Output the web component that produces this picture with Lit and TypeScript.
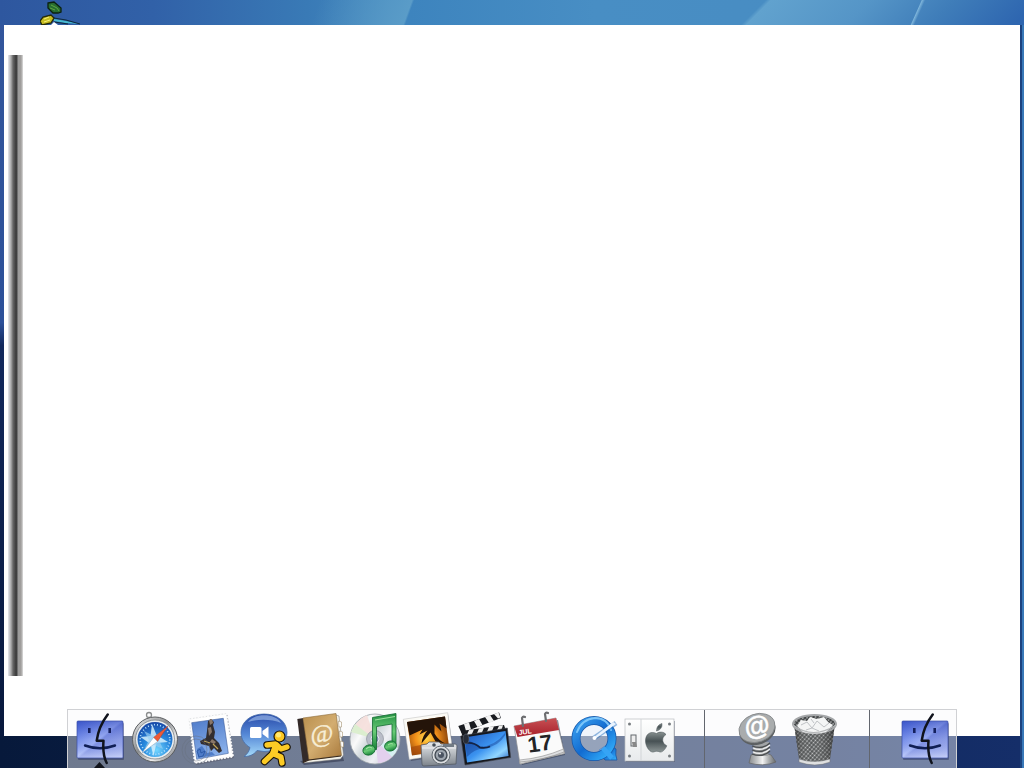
import { LitElement, html, svg, css } from "lit";
import { customElement, property } from "lit/decorators.js";

const finder = svg`
  <defs>
    <linearGradient id="face" x1="0" y1="0" x2="1" y2="1"><stop offset="0" stop-color="#4d6ce0"/><stop offset=".48" stop-color="#a9bbfa"/><stop offset=".52" stop-color="#8496e4"/><stop offset="1" stop-color="#b4bff2"/></linearGradient>
    <linearGradient id="shade" x1="0" y1="0" x2="0" y2="1"><stop offset="0" stop-color="#2a41b6" stop-opacity=".55"/><stop offset=".5" stop-color="#4a62d0" stop-opacity=".15"/><stop offset="1" stop-color="#dfe6ff" stop-opacity=".5"/></linearGradient>
  </defs>
  <rect x="6" y="14" width="46" height="37" rx="1" fill="#1a2450" opacity=".4"/>
  <rect x="5" y="12" width="46" height="37" rx="1" fill="url(#face)"/>
  <rect x="5" y="12" width="46" height="37" rx="1" fill="url(#shade)" stroke="#3a4fa8" stroke-width=".7"/>
  <path d="M17.300 19v5M37.700 19v5" stroke="#14205e" stroke-width="2.600"/>
  <path d="M13 36.500Q28 42 43 36.500" fill="none" stroke="#101f55" stroke-width="2.400" stroke-linecap="round"/>
  <path d="M35.700 5.500C30 13 26 22 24.700 31.700H31.500C30.800 41 32 49 34.700 54" fill="none" stroke="#10131c" stroke-width="2.500" stroke-linecap="round" stroke-linejoin="round"/>`;

const running = svg`${finder}<path d="M22 59l5.500-6 5.500 6z" fill="#12151c"/>`;

const safari = svg`
  <defs>
    <linearGradient id="steel" x1="0" y1="0" x2="1" y2="1"><stop offset="0" stop-color="#f4f4f4"/><stop offset=".45" stop-color="#8b8d90"/><stop offset=".7" stop-color="#eee"/><stop offset="1" stop-color="#55585c"/></linearGradient>
    <radialGradient id="dial" cx=".55" cy=".8" r=".8"><stop offset="0" stop-color="#72d6ff"/><stop offset=".5" stop-color="#2787dc"/><stop offset="1" stop-color="#1747a6"/></radialGradient>
  </defs>
  <circle cx="22" cy="6" r="2.500" fill="none" stroke="#8a8c8d" stroke-width="1.300"/><path d="M19.500 8.500h5l1 3h-6z" fill="#a3a5a6"/>
  <circle cx="28" cy="30.500" r="22.500" fill="url(#steel)" stroke="#5b5e61" stroke-width="1"/>
  <circle cx="28" cy="30.500" r="19.500" fill="#eceff1" stroke="#7c8388" stroke-width=".8"/>
  <circle cx="28" cy="30.500" r="17.500" fill="url(#dial)"/>
  <circle cx="28" cy="30.500" r="14.800" fill="none" stroke="#b6e2ff" stroke-width="1.700" stroke-dasharray="1 2.100"/>
  <path d="M25 15l4.500 11 11.500 7-11.500 1-3 13-3-12-10-7 10-1z" fill="#d5eefb" opacity=".85"/>
  <path d="M17 22l10 5 9-5-4 9 4 9-9-4-9 3 4-8z" fill="#9bd0f2" opacity=".65"/>
  <path d="M41 17L30.500 32.500l-4-4z" fill="#ed5a36" stroke="#a73522" stroke-width=".4"/>
  <path d="M15 44l11.500-15.500 4 4z" fill="#fff" stroke="#7894ad" stroke-width=".4"/>`;

const mail = svg`
  <defs><linearGradient id="sky" x1="0" y1="0" x2=".3" y2="1"><stop offset="0" stop-color="#4e7ac9"/><stop offset="1" stop-color="#89b0ea"/></linearGradient></defs>
  <path d="M7 10.500L44.500 5l6.500 43-38 7z" fill="#556" opacity=".5" transform="translate(1 1)"/>
  <path d="M7 10L44.500 4.500l6.500 43-38 6.500z" fill="#fff" stroke="#b9bdc2" stroke-width=".5"/>
  <path d="M7 10L44.500 4.500l6.500 43-38 6.500z" fill="none" stroke="#fbfbfb" stroke-width="2.200" stroke-linecap="round" stroke-dasharray="0 3.200"/>
  <path d="M9.700 13.700l31.600-4.400 5 35-31.600 6z" fill="url(#sky)" stroke="#3d5d9c" stroke-width=".6"/>
  <path d="M15 40l5-3 5 7 5-1 3 3-17 3z" fill="#3768ba" opacity=".7"/>
  <path d="M26 12l3-2 3 3-1 3 2 7-1 6 5 5 3 8-3 2-5-5-3 3-2-5-8-2-1-3 6-3 1-7z" fill="#332e30"/>
  <path d="M27 11l3-1 1 4-3 2zM26 19l3-1 1 5-3 4zM30 30l4 3-2 2-4-2z" fill="#8a7769"/>
  <path d="M22 32l6 2M31 35l5 5" stroke="#c2a557" stroke-width="1.200"/>
  <path d="M15 42l3-2 1 4 4-2-2 5-4 1z" fill="none" stroke="#24529f" stroke-width=".8"/>
  <g fill="none" stroke="#6a7280" stroke-width=".8" opacity=".6"><circle cx="14" cy="41" r="14"/><circle cx="14" cy="41" r="11"/></g>`;

const chat = svg`
  <defs>
    <linearGradient id="bubble" x1="0" y1="0" x2="0" y2="1"><stop offset="0" stop-color="#2749a8"/><stop offset=".48" stop-color="#5588d6"/><stop offset="1" stop-color="#a5dafa"/></linearGradient>
  </defs>
  <path d="M27 5C13.500 5 4 13 4 23.500c0 7 4 12 9 15-1 4-3 7-6 9 6 0 10-2 13-6l7 1c13.500 0 23-8.500 23-19S40.500 5 27 5z" fill="url(#bubble)" stroke="#486da8" stroke-width=".8"/>
  <path d="M11 13C17 4 39 4 44 14c-9-4-24-4-33-1z" fill="#a8c4ef" opacity=".6"/>
  <rect x="13" y="18" width="11.500" height="11" rx="1.500" fill="#fff"/><path d="M25.500 22l6-4.500v12l-6-4.500z" fill="#fff"/>
  <g stroke-linecap="round" stroke-linejoin="round" fill="none">
    <path d="M30 36l9-1 5 5 6-2M38.500 37l-3 8-8 7.500M37 45l7 3 1 6" stroke="#191307" stroke-width="7.500"/>
    <path d="M30 36l9-1 5 5 6-2M38.500 37l-3 8-8 7.500M37 45l7 3 1 6" stroke="#fccb25" stroke-width="5.300"/>
    <path d="M39 38l-2 6" stroke="#fccb25" stroke-width="7"/>
  </g>
  <circle cx="42.500" cy="27.500" r="5.500" fill="#fbc723" stroke="#191307" stroke-width="1.200"/><circle cx="41.500" cy="26" r="2.500" fill="#ffe873"/>`;

const book = svg`
  <defs><linearGradient id="tan" x1="0" y1="0" x2="1" y2="1"><stop offset="0" stop-color="#b98f4e"/><stop offset=".5" stop-color="#d3ad70"/><stop offset="1" stop-color="#a7783b"/></linearGradient></defs>
  <path d="M8 52l43-4 1 4-40 4z" fill="#293046" opacity=".55"/>
  <path d="M44 6l3 1 4.500 39-3 4-37 4z" fill="#f3f2ea" stroke="#777" stroke-width=".5"/>
  <path d="M46.500 12l3 1v5h-2.500zM47.500 22l3 1v5h-2.500zM48.500 32l3 1v5h-2.500z" fill="#fff" stroke="#96805b" stroke-width=".5"/>
  <path d="M5.300 10l6-1 6.500 41.500-7 3z" fill="#332a28"/>
  <path d="M11 9L44 4.500l5.500 42L17 51z" fill="url(#tan)" stroke="#8b6939" stroke-width=".6"/>
  <path d="M11 53.500l6-2.500 32-4" fill="none" stroke="#35271b" stroke-width="1.200"/>
  <text x="30" y="33" text-anchor="middle" font-family="Liberation Serif, serif" font-size="25" fill="#f7eed6" stroke="#f7eed6" stroke-width=".4" transform="rotate(-6 30 26)">@</text>`;

const music = svg`
  <defs>
    <linearGradient id="disc" x1="0" y1=".2" x2="1" y2=".8"><stop offset="0" stop-color="#d0d4d8"/><stop offset=".25" stop-color="#fafafa"/><stop offset=".45" stop-color="#cbd4d8"/><stop offset=".65" stop-color="#eff0f5"/><stop offset="1" stop-color="#b9c0c8"/></linearGradient>
    <linearGradient id="green" x1="0" y1="0" x2="0" y2="1"><stop offset="0" stop-color="#259144"/><stop offset=".5" stop-color="#69cb76"/><stop offset="1" stop-color="#178238"/></linearGradient>
  </defs>
  <circle cx="28" cy="30" r="25" fill="url(#disc)" stroke="#9da4aa" stroke-width=".8"/>
  <path d="M28 30L8 16q5-7 12-10z" fill="#f6dfdc" opacity=".9"/><path d="M28 30L4 23l4-8z" fill="#dceecf"/>
  <path d="M28 30l17 18q-7 6-14 6z" fill="#e3d0ee"/><path d="M28 30l23 9q-2 5-6 9z" fill="#d6eff2"/>
  <circle cx="28" cy="30" r="8.500" fill="#b9bdc8" stroke="#9297a0" stroke-width=".7"/><circle cx="28" cy="30" r="4" fill="#7f8baa" stroke="#e7e8ee"/>
  <g fill="url(#green)" stroke="#126a30" stroke-width=".8"><path d="M25.500 8.500L49 4.500v33h-4V15L29.500 17.500v23h-4z"/><ellipse cx="22" cy="41" rx="6.200" ry="5" transform="rotate(-18 22 41)"/><ellipse cx="43.500" cy="37" rx="6" ry="5" transform="rotate(-18 43.500 37)"/></g>
  <path d="M28 11l20-3.500M19 40q3-3 6-1M41 36q2-2 5-1" stroke="#9ce09d" fill="none" stroke-width="1.200"/>`;

const photo = svg`
  <defs>
    <radialGradient id="sunset" cx=".45" cy=".55" r=".65"><stop offset="0" stop-color="#ffd84a"/><stop offset=".4" stop-color="#f18f19"/><stop offset="1" stop-color="#602606"/></radialGradient>
    <linearGradient id="body" x1="0" y1="0" x2="0" y2="1"><stop offset="0" stop-color="#e9ebed"/><stop offset=".5" stop-color="#b3b8bd"/><stop offset="1" stop-color="#7c838b"/></linearGradient>
  </defs>
  <path d="M2 11L46 5l6 40-43 7z" fill="#333a50" opacity=".5"/>
  <path d="M1.300 10.300L45.700 3.700 51 44 7.300 50.500z" fill="#fbfaf5" stroke="#bbb" stroke-width=".5"/>
  <path d="M5 13L43 7.500 47.500 41 10 46.500z" fill="url(#sunset)"/>
  <path d="M5 13L43 7.500l1.500 12-7-5 2 8-7-7 0 9q4 7 11 10l-10-2-5-9-9 11q1-8 6-13l-8 4 3-5-13 6z" fill="#241409"/>
  <path d="M9 38l19-4 10 1v7l-28 4z" fill="#a64a0b" opacity=".7"/>
  <path d="M19 36l6-1 2-2h10l2 2h14q2 0 2 2l-1 18-32 2q-2 0-2-2z" fill="url(#body)" stroke="#555c65" stroke-width=".8"/>
  <path d="M20 39h34" stroke="#fff" opacity=".7"/><rect x="41" y="35" width="11" height="3" fill="#727b84"/><circle cx="32" cy="36" r="1.800" fill="#444d57"/>
  <circle cx="39" cy="46" r="9" fill="#dadde0" stroke="#646c74" stroke-width="1"/><circle cx="39" cy="46" r="6" fill="#9da5ae" stroke="#444c55" stroke-width="1.400"/><circle cx="39" cy="46" r="3" fill="#4a5361"/><circle cx="38" cy="44.500" r="1" fill="#fff"/>`;

const movie = svg`
  <defs><linearGradient id="film" x1="0" y1="0" x2="1" y2="1"><stop offset="0" stop-color="#1d50b4"/><stop offset=".5" stop-color="#3b93f0"/><stop offset=".75" stop-color="#91d6ff"/><stop offset="1" stop-color="#1c58bd"/></linearGradient></defs>
  <path d="M1.300 17L42 3.500l2 5.500L4.500 24z" fill="#191b20"/>
  <path d="M7 15l5-1.500 2 7-5 1.500zM17 12l5-2 3.500 6-5 2zM28 8l5-2 4 6-5 2zM37 5l4.500-1.500 2 5-2.500 1z" fill="#f3f3f3"/>
  <path d="M4 22l43-6 2 6-43 8z" fill="#191b20"/>
  <path d="M12 21l5-.7-3 7-5 .8zM22 19.500l5-.7-3 7-5 .8zM32 18l5-.7-3 7-5 .8zM42 16.700l4-.5-2 6-5 1z" fill="#efefef"/>
  <path d="M3.700 27l46.600-8 3.400 29.500L8 56z" fill="#15171d" stroke="#41454e" stroke-width=".6"/>
  <path d="M7 28.500L48.500 22l3 25-41.500 6.500z" fill="url(#film)"/>
  <path d="M8 29.500q10 5 15 8.500 15-1 25-14l.3 2q-7 12-21 13-10 1-17.500 9z" fill="#0c3489" opacity=".4"/>
  <path d="M9 34q8-1 14 4.500 6 1 10-1" fill="none" stroke="#142446" stroke-width="1.800"/><ellipse cx="9" cy="30" rx="3" ry="5" fill="#272c37" stroke="#616670" stroke-width=".6"/>`;

const calendar = svg`
  <defs><linearGradient id="red" x1="0" y1="0" x2="0" y2="1"><stop offset="0" stop-color="#c75154"/><stop offset="1" stop-color="#a71f2b"/></linearGradient></defs>
  <path d="M4 19l42-8 7 35-43 10z" fill="#303850" opacity=".55"/>
  <path d="M2 17L44 9l8.500 35.500L8 55z" fill="#fafafa" stroke="#8e8f92" stroke-width=".7"/>
  <path d="M2 17L44 9l3 12-41.500 7z" fill="url(#red)"/>
  <path d="M7.500 51q23-2 44-11l1 4.500L8 55z" fill="#dedfe1" stroke="#999" stroke-width=".7"/><path d="M8 53q24-2 44-10" fill="none" stroke="#888" stroke-width=".6"/>
  <g fill="none" stroke="#6c6d70" stroke-width="2.200" stroke-linecap="round"><path d="M11 17l-1-8q1-2 3-1"/><path d="M34 12l-1-7q1-2 3-1"/></g>
  <text x="7" y="26" font-family="Liberation Sans, sans-serif" font-size="7" font-weight="700" fill="#fff" transform="rotate(-8 7 26)">JUL</text>
  <text x="28" y="42" text-anchor="middle" font-family="Liberation Sans, sans-serif" font-size="22" font-weight="700" fill="#222326" transform="rotate(-8 28 35)">17</text>`;

const quick = svg`
  <defs><linearGradient id="ring" x1="0" y1="0" x2="1" y2="1"><stop offset="0" stop-color="#3aa0ef"/><stop offset=".5" stop-color="#126bd0"/><stop offset="1" stop-color="#35b4ff"/></linearGradient></defs>
  <path d="M32 41l9-6 8 5q-1 6 1 11l-12 0q-4-4-6-10z" fill="url(#ring)" stroke="#1454a5" stroke-width=".8"/>
  <circle cx="27" cy="29.500" r="18" fill="#d8e4f5" fill-opacity=".35" stroke="#1757a9" stroke-width="9"/>
  <circle cx="27" cy="29.500" r="18" fill="none" stroke="url(#ring)" stroke-width="7.500"/>
  <path d="M10 23q5-13 18-14 12 0 16 12" fill="none" stroke="#8fd3ff" stroke-width="2" stroke-linecap="round" opacity=".8"/>
  <path d="M36 39l9 10" stroke="#36a4f5" stroke-width="5"/>
  <path d="M27 29L49 14" stroke="#1867bc" stroke-width="5" opacity=".45"/><path d="M26 29L46 13l3 2-21 15z" fill="#e9f4ff"/><circle cx="27.500" cy="29" r="2" fill="#fff"/>`;

const settings = svg`
  <defs>
    <linearGradient id="plate" x1="0" y1="0" x2="0" y2="1"><stop offset="0" stop-color="#fff"/><stop offset="1" stop-color="#e8eaec"/></linearGradient>
    <linearGradient id="apple" x1="0" y1="0" x2="0" y2="1"><stop offset="0" stop-color="#87908f"/><stop offset=".45" stop-color="#475154"/><stop offset="1" stop-color="#8d9696"/></linearGradient>
  </defs>
  <rect x="4" y="12" width="49" height="41" fill="#394154" opacity=".45"/>
  <rect x="3" y="10" width="49" height="42" fill="url(#plate)" stroke="#babdc0" stroke-width=".7"/><path d="M19 10v42" stroke="#d2d5d8" stroke-width="1"/>
  <g fill="#777c80"><circle cx="7.500" cy="15" r="1.500"/><circle cx="47.500" cy="15" r="1.500"/><circle cx="7.500" cy="47" r="1.500"/><circle cx="47.500" cy="47" r="1.500"/></g>
  <rect x="9" y="26" width="5" height="11" fill="#eee" stroke="#63686c" stroke-width="1"/><path d="M10 33h4l1 5h-4z" fill="#888"/>
  <g fill="url(#apple)" stroke="#454f52" stroke-width=".5"><path d="M34.500 24.500c3-2 7-2 9.500 1-5 3-4 9 .8 11.300C43 41 40 43.500 38 43c-2.500-1-4-1-6.500 0-3 1-8-5-8-11 0-8 6-10 11-7.500z"/><path d="M34.500 22q0-6 5.500-7.500.5 6-5.500 7.500z"/></g>`;

const spring = svg`
  <defs><linearGradient id="metal"><stop offset="0" stop-color="#8a8d8f"/><stop offset=".3" stop-color="#c4c6c7"/><stop offset=".5" stop-color="#f2f2f2"/><stop offset=".75" stop-color="#a6a9ab"/><stop offset="1" stop-color="#66696b"/></linearGradient></defs>
  <path d="M21 46q10-4 20 0l5 7q-13 5-27 1z" fill="url(#metal)" stroke="#666" stroke-width=".7"/>
  <path d="M24 33h15l-1 14H23z" fill="#a1a4a6"/>
  <g fill="none" stroke="#4b4e50" stroke-width="1.300"><path d="M22 37q11 4 18-3M22 41q11 4 18-3M22 45q11 4 18-3"/><path d="M23 39q9 4 17-3M23 43q9 4 17-3" stroke="#f1f1f1"/></g>
  <ellipse cx="27.500" cy="21.500" rx="18.500" ry="14" fill="#5c6062" transform="rotate(-20 27.500 21.500)"/>
  <ellipse cx="27" cy="19" rx="18.500" ry="14" fill="#a9acad" stroke="#828587" stroke-width=".8" transform="rotate(-20 27 19)"/>
  <text x="27" y="26" text-anchor="middle" font-family="Liberation Sans, sans-serif" font-size="26" font-weight="700" font-style="italic" fill="#fff" stroke="#fff" stroke-width=".5" transform="rotate(-12 27 19)">@</text>`;

const trash = svg`
  <defs>
    <pattern id="mesh" width="3" height="3" patternUnits="userSpaceOnUse" patternTransform="rotate(40)"><rect width="3" height="3" fill="#343738"/><circle cx="1.500" cy="1.500" r=".9" fill="#c6c8c9"/></pattern>
    <linearGradient id="barrel"><stop offset="0" stop-color="#222" stop-opacity=".5"/><stop offset=".4" stop-color="#fff" stop-opacity=".12"/><stop offset="1" stop-color="#222" stop-opacity=".5"/></linearGradient>
  </defs>
  <path d="M9 15l5 35q15 7 31 0l5-35z" fill="url(#mesh)"/><path d="M9 15l5 35q15 7 31 0l5-35z" fill="url(#barrel)"/>
  <path d="M14 50q15 5 31 0v3q-15 6-31 0z" fill="#dfe0e1" stroke="#707274" stroke-width=".5"/>
  <ellipse cx="29.500" cy="15" rx="21.500" ry="9" fill="url(#mesh)" stroke="#a5a7a9" stroke-width="2"/>
  <path d="M12 17l4-6 6 1 3-4 7 2 7-2 4 5 5 3-7 7q-12 3-23 0z" fill="#f4f5f5"/>
  <path d="M16 16l6-3 5 6 5-7 7 6 5-4M21 21l6-2 7 3M26 10l3 4" fill="none" stroke="#bfc2c5" stroke-width="1"/>
  <path d="M8 16q20 15 43 0" fill="none" stroke="#b5b7b9" stroke-width="1.200"/>`;

interface App { name: string; art: unknown }

const groups: App[][] = [
  [
    { name: "Finder", art: running },
    { name: "Safari", art: safari },
    { name: "Mail", art: mail },
    { name: "iChat", art: chat },
    { name: "Address Book", art: book },
    { name: "iTunes", art: music },
    { name: "iPhoto", art: photo },
    { name: "iMovie", art: movie },
    { name: "iCal", art: calendar },
    { name: "QuickTime Player", art: quick },
    { name: "System Preferences", art: settings },
  ],
  [
    { name: "Apple web site", art: spring },
    { name: "Trash", art: trash },
  ],
  [{ name: "Finder window", art: finder }],
];

@customElement("dock-item")
class DockItem extends LitElement {
  @property({ attribute: false }) app!: App;
  static styles = css`
    :host { display: block; }
    .launch { display: block; padding: 0; border: 0; background: none; cursor: pointer; }
    .art { display: block; width: 55px; height: 58px; overflow: visible; }
  `;
  render() {
    return html`<button class="launch" aria-label=${this.app.name}>
      <svg class="art" viewBox="0 1 55 58" aria-hidden="true">${this.app.art}</svg>
    </button>`;
  }
}

@customElement("app-root")
class AppRoot extends LitElement {
  static styles = css`
    :host { display: block; font-family: "Liberation Sans", sans-serif; }
    .desktop {
      position: relative;
      display: grid;
      grid-template-rows: 25px 1fr 32px;
      height: 100vh;
      overflow: hidden;
      background:
        linear-gradient(90deg, #1c4380 2px, #3878b8 2px) right / 4px 100% no-repeat,
        linear-gradient(180deg, #33569c 0%, #2c5099 42%, #12285c 45%, #07173a 100%);
    }
    .sky {
      padding-left: 40px;
      background:
        linear-gradient(114deg, transparent 89%, #7db4da 89.1%, transparent 89.4%),
        linear-gradient(135deg, transparent 73%, #61a2ce 73.5%, #5595c7 83%, #3f7db9 91%, #2e66b0 99%),
        linear-gradient(110deg, transparent 31%, #5a9cc8 39.9%, transparent 40.1%),
        linear-gradient(90deg, #2e579f 0%, #3161a8 15%, #397ab6 30%, #4589be 38%, #3d84be 40%, #488ec4 58%, #488bc1 100%);
    }
    .shortcut { display: block; width: 40px; height: 25px; }
    .window { display: flex; margin: 0 4px; padding: 30px 4px 60px; background: #fff; }
    .edge {
      width: 15px;
      background: linear-gradient(90deg, #e6e8ee 0, #aaa 3px, #666 5px, #3a3a3a 8px, #444 9px, #999 10px, #a09e9c 13px, #ddd 15px);
    }
    .floor { margin-right: 4px; background: linear-gradient(90deg, #07193b, #0d2450 50%, #152e69); }
    .dock {
      position: absolute;
      bottom: 0;
      left: 50%;
      transform: translateX(-50%);
      display: flex;
      box-sizing: border-box;
      height: 59px;
      padding: 0 4px;
      border: 1px solid #d0d1d4;
      border-bottom: 0;
      background: rgba(249, 249, 251, 0.43);
    }
    .group { display: flex; }
    .group + .group { margin-left: 27px; padding-left: 25px; border-left: 1px solid #62666e; }
    .group:last-child { margin-left: 29px; padding-left: 27px; }
    .group + .group:last-child { margin-left: 29px; padding-left: 27px; }
  `;
  render() {
    return html`<main class="desktop">
      <div class="sky">
        <svg class="shortcut" viewBox="0 0 40 25" aria-hidden="true">
          <path d="M8 3l6-1 7 6v4l-3 1H13L8 8z" fill="#266c31" stroke="#0b210f" stroke-width="1.300"/>
          <path d="M11 5l6 3 2 3M10 8l5 2" stroke="#5fa53e" fill="none"/>
          <path d="M0 21l3-4 8-2 3 3-3 5-9 2z" fill="#c7bd22" stroke="#242909" stroke-width="1.300"/>
          <path d="M4 19l5-2M4 22l6-2" stroke="#f4ee76"/>
          <path d="M14 19l12 2 14 3-14-1-12-2z" fill="#48bcd0"/><path d="M14 18l12 2 14 4M14 22l14 2" stroke="#0d293b" fill="none"/><path d="M11 25l3-3 4 3z" fill="#fff"/>
        </svg>
      </div>
      <section class="window" aria-label="Window"><div class="edge"></div></section>
      <div class="floor"></div>
      <nav class="dock" aria-label="Dock">
        ${groups.map((g) => html`<div class="group">${g.map((a) => html`<dock-item .app=${a}></dock-item>`)}</div>`)}
      </nav>
    </main>`;
  }
}
